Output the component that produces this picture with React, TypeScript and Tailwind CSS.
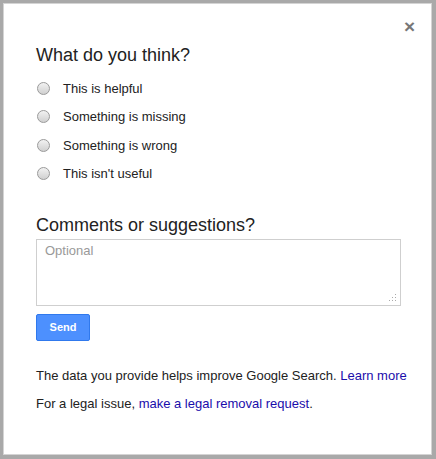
import React from "react";

const OPTIONS = [
  "This is helpful",
  "Something is missing",
  "Something is wrong",
  "This isn't useful",
];

function Radio() {
  return (
    <span className="block w-[13px] h-[13px] rounded-full border border-[#9a9a9a] bg-gradient-to-b from-[#f2f2f2] to-[#d0d0d0] shrink-0" />
  );
}

export default function App() {
  return (
    <div
      className="w-[436px] h-[459px] bg-[#a9a9a9] pt-[3px] pl-[3px]"
      style={{ fontFamily: '"Liberation Sans", Arial, sans-serif' }}
    >
      <div className="relative w-[429px] h-[452px] bg-white border border-[#d4d4d4] text-[#222]">
        {/* Close */}
        <button className="absolute top-[13px] right-[16px] text-[#777] text-[19px] font-bold leading-none">
          ×
        </button>

        <div className="pl-[32px] pt-[40px] pr-[20px]">
          <h2 className="text-[18px] leading-[22px] text-[#222]">What do you think?</h2>

          <div className="mt-[13px] flex flex-col gap-[10px]">
            {OPTIONS.map((o) => (
              <label key={o} className="flex items-center h-[18.5px] text-[13px]">
                <span className="ml-[1px]">
                  <Radio />
                </span>
                <span className="ml-[13px]">{o}</span>
              </label>
            ))}
          </div>

          <h2 className="mt-[31px] text-[18px] leading-[22px]">Comments or suggestions?</h2>

          <div className="relative mt-[3px] h-[67px] w-[365px] border border-[#cfcfcf]">
            <span className="absolute left-[8px] top-[1px] text-[13px] text-[#999]">Optional</span>
            <svg className="absolute right-[3px] bottom-[3px]" width="8" height="8" viewBox="0 0 8 8">
              <rect x="6" y="0" width="1" height="1" fill="#aaa" />
              <rect x="3" y="3" width="1" height="1" fill="#aaa" />
              <rect x="6" y="3" width="1" height="1" fill="#aaa" />
              <rect x="0" y="6" width="1" height="1" fill="#aaa" />
              <rect x="3" y="6" width="1" height="1" fill="#aaa" />
              <rect x="6" y="6" width="1" height="1" fill="#aaa" />
            </svg>
          </div>

          <button className="block mt-[8px] w-[54px] h-[27px] rounded-[2px] bg-[#4d90fe] border border-[#3079ed] text-white text-[11px] font-bold">
            Send
          </button>

          <p className="mt-[27px] text-[13px] leading-[16px] whitespace-nowrap">
            The data you provide helps improve Google Search.{" "}
            <a className="text-[#1a0dab]">Learn more</a>
          </p>
          <p className="mt-[12px] text-[13px] leading-[16px] whitespace-nowrap">
            For a legal issue,{" "}
            <a className="text-[#1a0dab]">make a legal removal request</a>.
          </p>
        </div>
      </div>
    </div>
  );
}
